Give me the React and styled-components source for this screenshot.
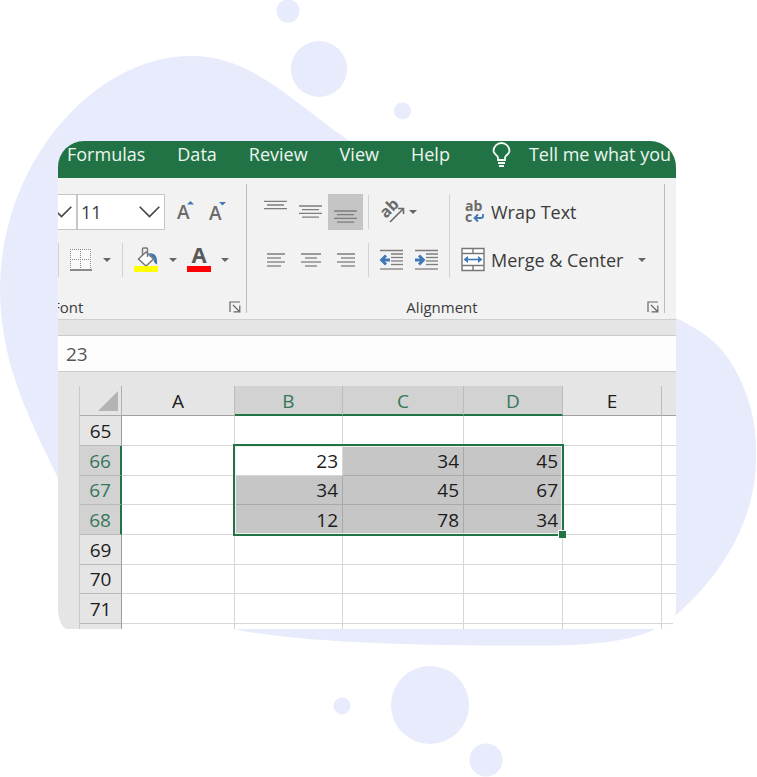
import React from 'react';
import styled, { createGlobalStyle } from 'styled-components';

const GREEN = '#217346';
const BLUE = '#3f78b5';
const INK = '#6b6b6b';
const TINT = '#e7ebfb';

const GlobalStyle = createGlobalStyle`
  *, *::before, *::after { box-sizing: border-box; }
  body { margin: 0; background: #fff; font-family: "Open Sans", "Noto Sans", sans-serif; }
  button, input, select { font: inherit; color: inherit; border: 0; padding: 0; margin: 0; background: none; border-radius: 0; }
  svg { display: block; flex: none; overflow: visible; }
`;

const Page = styled.main`
  position: relative;
  padding: 141px 81px 148px 58px;
  overflow: hidden;
`;
const Backdrop = styled.svg`
  position: absolute;
  inset: 0;
  width: 100%;
  z-index: -1;
`;
const Card = styled.section`
  overflow: hidden;
  height: 488px;
  background: #e5e5e5;
  border-radius: 26px 26px 10px 10px / 26px 26px 20px 20px;
`;

const TabBar = styled.nav`
  display: flex;
  align-items: flex-start;
  gap: 32px;
  height: 37px;
  padding-left: 9px;
  background: ${GREEN};
  color: #eef5f0;
  font-size: 18px;
  line-height: 26px;
  white-space: nowrap;
`;
const Tab = styled.button`
  flex: none;
`;
const TellMe = styled.button`
  display: flex;
  align-items: center;
  gap: 18px;
  flex: none;
  margin-left: 10px;
`;

const Ribbon = styled.div`
  display: flex;
  height: 142px;
  padding: 6px 11px 6px 0;
  background: #f2f2f2;
  border-bottom: 1px solid #cfcfcf;
  color: #3b3b3b;
`;
const Group = styled.section`
  display: flex;
  flex-direction: column;
  flex: ${(p) => (p.$grow ? '1' : '0 0 189px')};
  min-width: 0;
  padding-top: 10px;
  border-right: 1px solid #bdbdbd;
`;
const Tools = styled.div`
  display: flex;
  padding-left: ${(p) => p.$inset || 0}px;
`;
const Stack = styled.div`
  display: flex;
  flex-direction: column;
  gap: 12px;
`;
const Row = styled.div`
  display: flex;
  align-items: center;
  height: 36px;
  gap: ${(p) => p.$gap || 0}px;
`;
const Pair = styled.div`
  display: flex;
  align-items: center;
  gap: 12px;
  padding-left: 12px;
`;
const Rule = styled.span`
  flex: none;
  width: 1px;
  height: ${(p) => (p.$tall ? 84 : 34)}px;
  margin: 0 ${(p) => p.$space || 0}px;
  background: #d2d2d2;
`;
const IconButton = styled.button`
  display: flex;
  align-items: center;
  justify-content: center;
  flex: none;
  width: ${(p) => (p.$cell ? '35px' : 'auto')};
  height: 36px;
  background: ${(p) => (p.$pressed ? '#c5c5c5' : 'transparent')};
`;
const TextButton = styled.button`
  display: flex;
  align-items: center;
  gap: 6px;
  height: 36px;
  font-size: 18px;
  white-space: nowrap;
`;
const Combo = styled.label`
  display: grid;
  grid-template-columns: minmax(0, 1fr);
  align-items: center;
  flex: 0 0 ${(p) => (p.$clipped ? 19 : 88)}px;
  height: 36px;
  overflow: hidden;
  background: #fff;
  border: 1px solid #c6c6c6;
  border-left-width: ${(p) => (p.$clipped ? 0 : 1)}px;

  > * { grid-area: 1 / 1; }
  > svg { justify-self: end; margin-right: 4px; pointer-events: none; }
`;
const Select = styled.select`
  appearance: none;
  width: 100%;
  height: 34px;
  padding-left: 3px;
  font-size: 18px;
  outline: none;
`;
const Caption = styled.footer`
  display: flex;
  align-items: center;
  gap: 10px;
  height: 12px;
  margin-top: auto;
  padding-right: 5px;
  font-size: 15px;
  line-height: 24px;
`;
const CaptionText = styled.span`
  flex: 1;
  margin-left: ${(p) => (p.$clipped ? -6 : 0)}px;
  text-align: ${(p) => (p.$clipped ? 'left' : 'center')};
`;

const FormulaBar = styled.input`
  display: block;
  width: 100%;
  height: 37px;
  margin-top: 15px;
  padding-left: 8px;
  background: #fdfdfd;
  border-top: 1px solid #cbcbcb;
  border-bottom: 1px solid #cbcbcb;
  color: #555;
  font-size: 19px;
  outline: none;
`;

const Sheet = styled.div`
  position: relative;
  margin: 14px 0 0 21px;
`;
const Grid = styled.table`
  width: 100%;
  table-layout: fixed;
  border-collapse: separate;
  border-spacing: 0;
  font-size: 19px;
  line-height: 24px;
  color: #1c1c1c;

  tr > :last-child { border-right: 0; }
`;
const Col = styled.col`
  width: ${(p) => (p.$w ? `${p.$w}px` : 'auto')};
`;
const BodyRow = styled.tr`
  height: 30px;
  &:nth-child(3n) { height: 29px; }
`;
const Corner = styled.th`
  height: 30px;
  padding: 0 3px 0 0;
  border-left: 1px solid #c9c9c9;
  border-right: 1px solid #b0b0b0;
  border-bottom: 1px solid #ababab;

  > svg { margin-left: auto; }
`;
const ColumnHead = styled.th`
  height: 30px;
  padding: ${(p) => (p.$on ? '2px 0 0' : '1px 0 0')};
  font-weight: 400;
  color: ${(p) => (p.$on ? '#35775a' : 'inherit')};
  background: ${(p) => (p.$on ? '#d2d2d2' : 'transparent')};
  border-right: 1px solid #bcbcbc;
  border-bottom: ${(p) => (p.$on ? `2px solid ${GREEN}` : '1px solid #a0a0a0')};
`;
const RowHead = styled.th`
  padding: 0;
  font-weight: 400;
  color: ${(p) => (p.$on ? '#35775a' : 'inherit')};
  background: ${(p) => (p.$on ? '#d2d2d2' : '#e5e5e5')};
  border-left: 1px solid #c9c9c9;
  border-right: ${(p) => (p.$on ? `2px solid ${GREEN}` : '1px solid #9c9c9c')};
  border-bottom: 1px solid #b9b9b9;
`;
const Cell = styled.td`
  padding: 0 4px 0 0;
  text-align: right;
  background: ${(p) => (p.$filled ? '#c6c6c6' : '#fff')};
  border-right: 1px solid ${(p) => (p.$filled ? '#a9a9a9' : '#d6d6d6')};
  border-bottom: 1px solid ${(p) => (p.$filled ? '#a9a9a9' : '#d6d6d6')};
`;
const Selection = styled.div`
  position: absolute;
  left: 154px;
  top: 58px;
  width: 331px;
  height: 92px;
  border: 2px solid ${GREEN};
  box-shadow: inset 0 0 0 1px #f0f0f0;
  pointer-events: none;

  &::after {
    content: '';
    position: absolute;
    right: -4px;
    bottom: -4px;
    width: 8px;
    height: 8px;
    background: ${GREEN};
    border: 1px solid #fff;
    border-right: 0;
    border-bottom: 0;
  }
`;

const Caret = ({ label }) => (
  <IconButton aria-label={label}>
    <svg width="8" height="4" viewBox="0 0 8 4"><path d="M0 0h8L4 4z" fill="#666" /></svg>
  </IconButton>
);

const Chevron = () => (
  <svg width="21" height="12" viewBox="0 0 21 12">
    <path d="M.7.8 10.5 10.6 20.3.8" fill="none" stroke="#444" strokeWidth="1.6" />
  </svg>
);

/* Each line is [x, y, length]. */
const Lines = ({ w, h, lines, children }) => (
  <svg width={w} height={h} viewBox={`0 0 ${w} ${h}`}>
    {lines.map(([x, y, n]) => (
      <path key={`${x}-${y}`} d={`M${x} ${y}h${n}`} stroke="#7d7d7d" strokeWidth="1.3" />
    ))}
    {children}
  </svg>
);

const Launcher = ({ label }) => (
  <IconButton aria-label={label}>
    <svg width="12" height="12" viewBox="0 0 12 12" fill="none" stroke="#666" strokeWidth="1.2">
      <path d="M1 11V1h10M4 4l6 6M10.8 4.5v6.3H4.5" />
    </svg>
  </IconButton>
);

const SizeIcon = ({ grow }) => (
  <svg width="20" height="24" viewBox="0 0 20 24">
    <text x="0" y={grow ? 19 : 20} fontSize="19" fontWeight="600" fill={INK}>A</text>
    <path d={grow ? 'M10 4.500h7L13.500 1z' : 'M10 2h7l-3.500 3.500z'} fill={BLUE} />
  </svg>
);

const BordersIcon = () => (
  <svg width="22" height="24" viewBox="0 0 22 24" fill="none">
    <path d="M0 1h22v20H0z" fill="#fafafa" />
    <path d="M0 1.500h22M0 11.500h22M.5 1v20M10.500 1v20M20.500 1v20" stroke="#8a8a8a" strokeWidth="1" strokeDasharray="1 1" />
    <path d="M0 22h22" stroke="#8a8a8a" strokeWidth="2" />
  </svg>
);

const BucketIcon = () => (
  <svg width="24" height="26" viewBox="0 0 24 26">
    <path d="M15 6.500c5-1 9 2 8 11-2.500-1-3.500-3-3.500-6z" fill={BLUE} />
    <path d="M4.500 12 12 5l7.500 7-7.500 7z" fill="#fff" stroke="#777" strokeWidth="1.500" />
    <path d="M8.500 8V2q0-1 1-1h3q1 0 1 1v8" fill="none" stroke="#777" strokeWidth="1.400" />
    <path d="M0 19h24v6H0z" fill="#ff0" />
  </svg>
);

const FontColorIcon = () => (
  <svg width="24" height="26" viewBox="0 0 24 26">
    <text x="12" y="16" textAnchor="middle" fontSize="22" fontWeight="700" fill="#595959">A</text>
    <path d="M0 19h24v6H0z" fill="#f00" />
  </svg>
);

const OrientationIcon = () => (
  <svg width="24" height="24" viewBox="0 0 24 24">
    <text transform="translate(6 19) rotate(-45)" fontSize="16" fontWeight="700" fill={INK}>ab</text>
    <path d="M10 22 23 9M18 8.500h5.500V14" fill="none" stroke={INK} strokeWidth="1.600" />
  </svg>
);

const IndentIcon = ({ right }) => (
  <Lines w={23} h={22} lines={[[0, 1.5, 23], [11, 5, 12], [11, 8.5, 12], [11, 12, 12], [11, 15.5, 12], [0, 20, 23]]}>
    <path
      d={right ? 'M0 11h8M4 6.500 8.500 11 4 15.500' : 'M10 11H2M6 6.500 1.500 11 6 15.500'}
      fill="none" stroke={BLUE} strokeWidth="2.800"
    />
  </Lines>
);

const WrapIcon = () => (
  <svg width="24" height="24" viewBox="0 0 24 24">
    <text x="4" y="11" fontSize="14" fontWeight="700" fill={INK}>ab</text>
    <text x="4" y="22" fontSize="14" fontWeight="700" fill={INK}>c</text>
    <path d="M22 14v2q0 2-2 2h-6M17 14.500 13.500 18l3.500 3.500" fill="none" stroke={BLUE} strokeWidth="1.800" />
  </svg>
);

const MergeIcon = () => (
  <svg width="24" height="26" viewBox="0 0 24 26">
    <path d="M1 1.500h22v22H1zM1 6.500h22M1 18.500h22M12 1.500v5M12 18.500v5" fill="#fff" stroke="#777" strokeWidth="1.400" />
    <path d="M4 12.500h16" stroke={BLUE} strokeWidth="1.600" />
    <path d="M7 9v7L2.500 12.500zM17 9v7l4.500-3.500z" fill={BLUE} />
  </svg>
);

const BulbIcon = () => (
  <svg width="19" height="26" viewBox="0 0 19 26" fill="none" stroke="#f2f8f4" strokeWidth="1.800">
    <path d="M6 19v-2.500C5.500 14 1.500 13 1.500 10a8 8 0 0 1 16 0c0 3-4 4-4.500 6.500V19zM6 22h7M7 25h5" />
  </svg>
);

const LONG_SHORT = [[0, 23], [3, 17], [0, 23], [3, 17]];
const vertical = (top, count) =>
  LONG_SHORT.slice(0, count).map(([x, n], i) => [x, top + i * 3.7, n]);

const TABS = ['Formulas', 'Data', 'Review', 'View', 'Help'];
const COLUMNS = ['A', 'B', 'C', 'D', 'E', ''];
const WIDTHS = [43, 113, 108, 121, 99, 99];
const ROWS = [
  [65], [66, 23, 34, 45], [67, 34, 45, 67], [68, 12, 78, 34], [69], [70], [71], [''],
];
const isSelectedColumn = (i) => i > 0 && i < 4;

export default function App() {
  return (
    <Page>
      <GlobalStyle />
      <Backdrop viewBox="0 0 757 777" fill={TINT} aria-hidden="true">
        <path d="M188 56C250 54 290 100 348 140C450 210 590 285 676 318C704 332 722 344 737 373C750 398 757 425 756 458C756 520 722 575 676 615C650 639 610 646 530 645.500C450 646 300 644 234 629C140 605 92 545 58 478C25 410 0 360 0 287C2 160 95 58 188 56Z" />
        <circle cx="288" cy="11" r="11.500" />
        <circle cx="319" cy="69" r="28" />
        <circle cx="402.500" cy="111" r="8.500" />
        <circle cx="342" cy="706" r="8.500" />
        <circle cx="430" cy="705" r="39" />
        <circle cx="486" cy="760" r="16.500" />
      </Backdrop>

      <Card>
        <TabBar>
          {TABS.map((name) => <Tab key={name}>{name}</Tab>)}
          <TellMe><BulbIcon />Tell me what you</TellMe>
        </TabBar>

        <Ribbon>
          <Group>
            <Stack>
              <Row>
                <Combo $clipped><Chevron /></Combo>
                <Combo>
                  <Select aria-label="Font size" defaultValue="11">
                    <option>11</option>
                    <option>12</option>
                  </Select>
                  <Chevron />
                </Combo>
                <Pair>
                  <IconButton aria-label="Increase font size"><SizeIcon grow /></IconButton>
                  <IconButton aria-label="Decrease font size"><SizeIcon /></IconButton>
                </Pair>
              </Row>
              <Row $gap={11}>
                <Rule />
                <IconButton aria-label="Borders"><BordersIcon /></IconButton>
                <Caret label="Border options" />
                <Rule />
                <IconButton aria-label="Fill color"><BucketIcon /></IconButton>
                <Row $gap={10}>
                  <Caret label="Fill options" />
                  <IconButton aria-label="Font color"><FontColorIcon /></IconButton>
                  <Caret label="Font color options" />
                </Row>
              </Row>
            </Stack>
            <Caption>
              <CaptionText $clipped>Font</CaptionText>
              <Launcher label="Font settings" />
            </Caption>
          </Group>

          <Group $grow>
            <Tools $inset={11}>
              <Stack>
                <Row>
                  <IconButton $cell aria-label="Top align">
                    <Lines w={23} h={24} lines={vertical(1.3, 3)} />
                  </IconButton>
                  <IconButton $cell aria-label="Middle align">
                    <Lines w={23} h={24} lines={vertical(6, 4)} />
                  </IconButton>
                  <IconButton $cell $pressed aria-label="Bottom align" aria-pressed="true">
                    <Lines w={23} h={24} lines={vertical(11, 4)} />
                  </IconButton>
                  <Rule $space={5} />
                  <IconButton $cell aria-label="Orientation"><OrientationIcon /></IconButton>
                  <Caret label="Orientation options" />
                </Row>
                <Row>
                  <IconButton $cell aria-label="Align left">
                    <Lines w={18} h={14} lines={[[0, 1, 18], [0, 5, 14], [0, 9, 18], [0, 13, 14]]} />
                  </IconButton>
                  <IconButton $cell aria-label="Center">
                    <Lines w={20} h={14} lines={[[0, 1, 20], [4, 5, 12], [0, 9, 20], [4, 13, 12]]} />
                  </IconButton>
                  <IconButton $cell aria-label="Align right">
                    <Lines w={18} h={14} lines={[[0, 1, 18], [4, 5, 14], [0, 9, 18], [4, 13, 14]]} />
                  </IconButton>
                  <Rule $space={5} />
                  <IconButton $cell aria-label="Decrease indent"><IndentIcon /></IconButton>
                  <IconButton $cell aria-label="Increase indent"><IndentIcon right /></IconButton>
                </Row>
              </Stack>
              <Rule $tall $space={5} />
              <Tools $inset={6}>
                <Stack>
                  <Row><TextButton><WrapIcon />Wrap Text</TextButton></Row>
                  <Row $gap={15}>
                    <TextButton><MergeIcon />Merge &amp; Center</TextButton>
                    <Caret label="Merge options" />
                  </Row>
                </Stack>
              </Tools>
            </Tools>
            <Caption>
              <CaptionText>Alignment</CaptionText>
              <Launcher label="Alignment settings" />
            </Caption>
          </Group>
        </Ribbon>

        <FormulaBar aria-label="Formula bar" defaultValue="23" />

        <Sheet>
          <Grid>
            <colgroup>
              {WIDTHS.map((w, i) => <Col key={i} $w={w} />)}
              <Col />
            </colgroup>
            <thead>
              <tr>
                <Corner aria-label="Select all">
                  <svg width="20" height="20" viewBox="0 0 20 20"><path d="M20 0v20H0z" fill="#b4b4b4" /></svg>
                </Corner>
                {COLUMNS.map((c, i) => <ColumnHead key={i} $on={isSelectedColumn(i)}>{c}</ColumnHead>)}
              </tr>
            </thead>
            <tbody>
              {ROWS.map(([head, ...values], r) => (
                <BodyRow key={r}>
                  <RowHead scope="row" $on={values.length > 0}>{head}</RowHead>
                  {COLUMNS.map((c, i) => (
                    <Cell
                      key={i}
                      $filled={values.length > 0 && isSelectedColumn(i) && !(r === 1 && i === 1)}
                    >
                      {values[i - 1]}
                    </Cell>
                  ))}
                </BodyRow>
              ))}
            </tbody>
          </Grid>
          <Selection />
        </Sheet>
      </Card>
    </Page>
  );
}
